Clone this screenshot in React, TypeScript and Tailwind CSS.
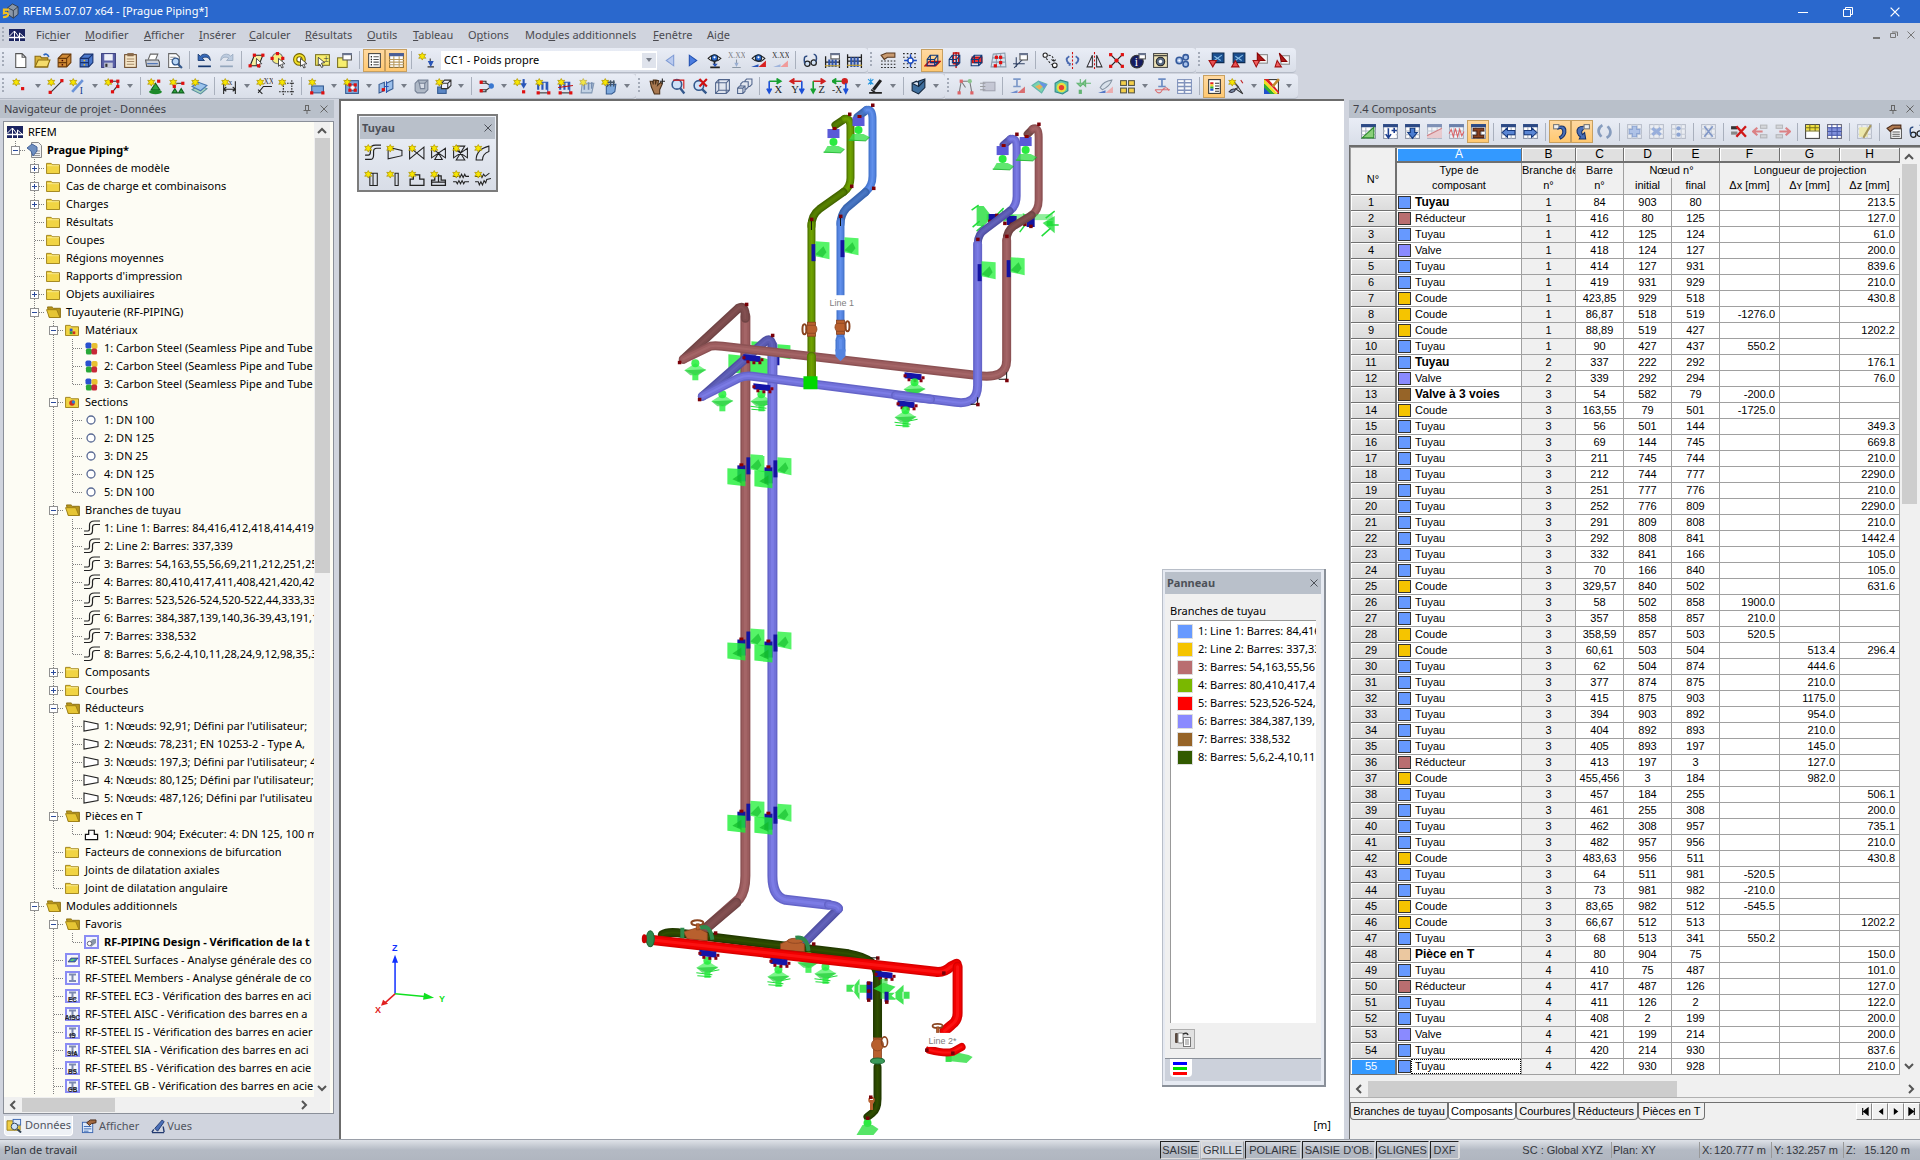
import React from "react";
import type { ReactNode } from "react";

const UI = "font-['Noto_Sans',sans-serif]";
const ARIAL = "font-['Liberation_Sans',Arial,sans-serif]";

/* ---------- drawing helpers (16 x 16 icons) ---------- */
const P = (d: string, stroke = "#222", fill = "none", w = 1) => (
  <path d={d} stroke={stroke} fill={fill} strokeWidth={w} />
);
const R = (x: number, y: number, w: number, h: number, fill = "none", stroke = "none") => (
  <rect x={x} y={y} width={w} height={h} fill={fill} stroke={stroke} />
);
const C = (x: number, y: number, r: number, fill = "none", stroke = "none", w = 1) => (
  <circle cx={x} cy={y} r={r} fill={fill} stroke={stroke} strokeWidth={w} />
);
const T = (x: number, y: number, s: string, size = 7, fill = "#333") => (
  <text x={x} y={y} fontSize={size} fill={fill} fontFamily="Liberation Serif, serif">{s}</text>
);
const Star = (
  <path d="M4 .5L5 2.400 7.300 2.200 6 4 7.300 5.900 5 5.700 4 7.600 3 5.700 .7 5.900 2 4 .7 2.200 3 2.400z" fill="#f7e600" stroke="#b09600" strokeWidth=".7" />
);
const Node = (x: number, y: number) => R(x - 1.5, y - 1.5, 3, 3, "#e01010");
const Grid = (
  <>
    {R(1.5, 1.5, 13, 13, "#fff", "#8a93a5")}
    {R(1, 1, 14, 3, "#2c4a86")}
    {P("M1 7.500h14M1 11h14M5.500 4v11M10.500 4v11", "#a9b1c0")}
  </>
);
const GrayGrid = (
  <>
    {R(1.5, 1.5, 13, 13, "#eef0f4", "#a6adba")}
    {P("M1 5.500h14M1 10.500h14M5.500 1v14M10.500 1v14", "#b9c0cc")}
  </>
);
const LoadTable = (
  <>
    {P("M2 4h10v9", "#2855b8")}
    {P("M3 4v7M7 4v7M11 4v7", "#2855b8", "none", 2)}
    {P("M2 14h12", "#333")}
    {Node(3, 14)}
    {Node(13, 14)}
  </>
);
const Axis = (a: string, b: string, l: string) => (
  <>
    {P("M3 3h10M10 .5L14 3l-4 2.500", a, a, 1.5)}
    {P("M3 3v10M.8 10L3 14l2.200-4", b, b, 1.5)}
    {T(8, 14, l, 10, "#222")}
  </>
);
const Persp = (fill: string, d: string) => (
  <>
    {P(d, "#c01010", fill, 1.3)}
    {P("M3 7h7v6H3zM6 3h7v7H6zM3 7l3-4M10 7l3-4M10 13l3-3", "#123a78")}
  </>
);
const Eye = (
  <>
    {P("M2 6q5-6 12 0q-6 6-12 0z", "#222", "#fff")}
    {C(8, 5.500, 3, "#2a66c8", "#123")}
    {C(8, 5, 1, "#fff")}
  </>
);
const Tri = (c1: string, c2: string) => (
  <>
    {P("M1 14h7V11.500z", "none", c1)}
    {P("M8 14h7V8z", "none", c2)}
  </>
);

const ICONS: Record<string, ReactNode> = {
  new: P("M3.500 1.500h6l3.500 3.500v9.500H3.500zM9.500 1.500V5H13", "#555", "#fff"),
  open: <>{P("M1 4h5l1 1.500h6V14H1z", "#8a6a10", "#d9b43a")}{P("M1 14l3-6.500h11L12.500 14z", "#8a6a10", "#f5dc6c")}{P("M9 3q3-2.500 5 1.500", "#2c66c0", "none", 1.5)}</>,
  archive: <>{P("M2 6l4-4h8v8l-4 4H2z", "#6b3a08", "#d08a35")}{P("M2 6h8v8M10 6l4-4M2 10h8", "#6b3a08")}{C(6, 8, .8, "#400")}{C(6, 12, .8, "#400")}</>,
  archiveBlue: <>{P("M2 6l4-4h8v8l-4 4H2z", "#16306e", "#4a78cc")}{P("M2 6h8v8M10 6l4-4M2 10h8", "#16306e")}{C(6, 8, .8, "#f4c020")}{C(6, 12, .8, "#f4c020")}</>,
  save: <>{R(1.5, 1.500, 13, 13, "#5b62a8", "#3c4080")}{R(4, 2, 8, 6, "#eceef8")}{R(4, 10, 8, 5, "#c5c8d8")}{R(5, 11, 2, 3, "#333")}</>,
  clipboard: <>{R(2.5, 2.500, 11, 12, "#f6e6c8", "#6c4b2c")}{R(5, 1, 6, 3, "#8a6a4a")}{P("M4.500 6.500h7M4.500 9h7M4.500 11.500h7", "#a58a68")}</>,
  print: <>{P("M4 7l2-5h7l-2 5", "#666", "#fff")}{P("M1.500 7.500h12l1 2v4h-12z", "#555", "#c9ced8")}{P("M3 11h10", "#3b66b0")}</>,
  preview: <>{P("M2.500 1.500h7l3 3v10h-10z", "#666", "#fff")}{P("M4 5h5M4 7h4", "#999")}{C(9, 9, 3.2, "#b9d6f6", "#34588c", 1.2)}{P("M11.500 11.500L15 15", "#34588c", "none", 2)}</>,
  undo: <>{P("M2 2v6h6L5.800 5.800Q11 3 13.500 8Q13 2 8 2Q5.500 2 4 4z", "#14366e", "#3568b8", .8)}{P("M2 13.500h12", "#14366e", "none", 1.6)}</>,
  redo: <g opacity=".55">{P("M14 2v6H8l2.200-2.200Q5 3 2.500 8Q3 2 8 2Q10.500 2 12 4z", "#5c7898", "#9fb6d2", .8)}{P("M2 13.500h12", "#5c7898", "none", 1.6)}</g>,
  selPara: <>{P("M2 13l4-10h8l-4 10z", "#222", "#f7f0a0")}{P("M8 6l5 5-2.500.3 1 2.700-1.300.4-1.100-2.600-1.300 1.200z", "#333", "#fff", .8)}{Node(2, 13)}{Node(6, 3)}{Node(14, 3)}{Node(10, 13)}</>,
  selLasso: <>{C(7, 6, 5, "#f7ef80", "#777")}{Node(2, 6)}{Node(7, 1.500)}{Node(12, 6)}{P("M8 6l6 5-3 .5 1.500 3-1.500.5-1.300-3-1.700 1.500z", "#333", "#fff", .8)}</>,
  selEllipse: <>{C(7, 7, 5.500, "#f4e22a", "#776600")}{C(7, 7, 2.500, "#fff", "#776600")}{P("M8 6l6 5-3 .5 1.500 3-1.500.5-1.300-3-1.700 1.500z", "#333", "#fff", .8)}</>,
  selPlus: <>{R(1.5, 2.500, 13, 10, "#f7ee6e", "#7a7020")}{T(9, 9, "±", 9)}{P("M4 5l6 5-3 .5 1.500 3.500-1.500.5-1.500-3L4 12.500z", "#333", "#fff", .8)}</>,
  noteCard: <>{R(1.5, 5.500, 9, 9, "#f7ee6e", "#7a7020")}{R(6.500, 1.500, 8, 6, "#fff", "#555")}{R(6, 1, 9, 2, "#6a7590")}</>,
  list: <>{R(2.500, 1.500, 11, 13, "#fff", "#444")}{P("M4.500 4.500h1M4.500 7h1M4.500 9.500h1M4.500 12h1", "#000", "none", 1.4)}{P("M7 4.500h5M7 7h5M7 9.500h5M7 12h5", "#555")}</>,
  table: <>{R(1.5, 1.500, 13, 13, "#fff", "#8c6c30")}{R(1, 1, 14, 3, "#4b5f98")}{P("M1 7h14M1 9.500h14M1 12h14M5.500 4v11M10.500 4v11", "#b99a60")}</>,
  starLoad: <>{Star}{P("M9 14h6M11.500 6v5", "#333")}{P("M10 9h4l-2 4z", "#2855b8", "#2855b8")}</>,
  left: P("M11 3v10L4 8z", "#7f9bd4", "#b9caef"),
  right: P("M5 3v10l7-5z", "#2150b0", "#4a7ce0"),
  eyeDown: <>{Eye}{P("M8 9v3M4 14.500h9", "#222", "none", 1.6)}{P("M6 11h5l-2.500 3z", "none", "#2855b8")}</>,
  xxxDown: <g opacity=".6">{T(0, 6, "X.XX", 7)}{P("M8 7v4M4 14.500h8", "#567")}{P("M6 10h4l-2 4z", "none", "#6a8ac0")}</g>,
  eyeTri: <>{Eye}{Tri("#2855b8", "#d82020")}</>,
  xxxTri: <>{T(0, 6, "X.XX", 7)}{Tri("#9fb4dc", "#f09a9a")}</>,
  glasses: <>{C(5, 11, 2.500, "#cfe0f4", "#222", 1.2)}{C(11, 10, 2.500, "#cfe0f4", "#222", 1.2)}{P("M2.500 11Q1 3 5 4M13 9Q15 3 11 2", "#2b4a80", "none", 1.4)}</>,
  ruler1: <>{P("M1.500 4v11M14.500 7v8M1 9.500h14", "#222", "none", 1.2)}{P("M5 7v7M8 7v7M11 7v7", "#2d52a8", "none", 2)}{P("M1 13h14", "#c8a020")}{R(6.500, 1.500, 8, 5, "#fff", "#555")}{R(6, 1, 9, 2, "#6a7590")}</>,
  ruler2: <>{P("M1.500 2v13M14.500 2v13M1 8.500h14M1 5h14", "#222", "none", 1.2)}{P("M5 5v9M8 5v9M11 5v9", "#2d52a8", "none", 2)}{P("M1 12.500h14", "#c8a020")}</>,
  handGrid: <>{P("M1 3l5-2h8v4H7L4 7z", "#5a3a20", "#c89a70")}<g strokeDasharray="1.500 1.500">{P("M1 8.500h14M1 11.500h14M1 14.500h14", "#222")}</g></>,
  gridCross: <><g strokeDasharray="1.500 2">{P("M1 1.500h14M1 5h14M1 11h14M1 14.500h14", "#222")}</g>{C(8, 8, 2.500, "#fff", "#1b4ac0", 1.300)}{P("M8 2v4M8 10v4M2 8h4M10 8h4", "#1b4ac0", "none", 1.300)}</>,
  planeXY: Persp("#f6a6a6", "M1 13l4-4h10l-4 4z"),
  planeXZ: Persp("none", "M7 1h5v10H7zM9.500 0v15"),
  planeYZ: Persp("#f03030", "M4 5h9v5H4z"),
  gridRed: <>{P("M3 2l11-1 1 13H1z", "#8a9aaa", "#d8e4f0")}{P("M2 5.500h12M2 9.500h12M6 2v12M10 2v12", "#8a9aaa")}{Node(6, 5)}{Node(10, 5)}{Node(10, 10)}{Node(5, 13)}</>,
  axes: <>{P("M4 14V5M1 11h11M2 15l8-8", "#346")}{R(7.500, 1.500, 7, 6, "#fff", "#555")}{R(7, 1, 8, 2, "#6a7590")}</>,
  move: <>{C(3, 3, 2, "#fff", "#222")}{C(12, 12.500, 2.200, "#fff", "#222")}<g strokeDasharray="2 1.500">{P("M6 3q5 0 5 6M9 7l2 2 2-2M4 6l5 6", "#222")}</g></>,
  rotate: <>{P("M5 4Q0 7 5 11M11 4q5 3 0 7M3 10l2.500 1L5 13", "#4a6ab0", "none", 1.800)}<g strokeDasharray="2 1.500">{P("M8 0v16", "#d01010")}</g></>,
  mirror: <>{P("M6 3v11H1zM10 3v11h5z", "#333", "#eef")}<g strokeDasharray="2 1.500">{P("M8 0v16", "#d01010")}</g></>,
  crossx: <>{P("M2 2l12 12M14 2L2 14", "#222", "none", 1.200)}{Node(2.500, 2.500)}{Node(13.500, 2.500)}{Node(2.500, 13.500)}{Node(13.500, 13.500)}{C(8, 8, 2, "#e01010")}</>,
  info: <>{C(6.500, 9, 6, "#151c60", "#333")}{T(4.500, 13, "i", 11, "#fff")}{R(8.500, 1.500, 6, 5, "#fff", "#555")}{R(8, 1, 7, 2, "#6a7590")}</>,
  docGear: <>{R(1.500, 1.500, 13, 13, "#ede3b8", "#444")}{C(8, 9, 4, "#5a6a80", "#222")}{C(8, 9, 1.600, "#fff")}{P("M2 3.500h12", "#222")}</>,
  gears: <>{C(5, 8, 3, "#a9c2ea", "#345a9c", 1.500)}{C(11, 5, 2.500, "#a9c2ea", "#345a9c", 1.500)}{C(11, 11.500, 2.500, "#a9c2ea", "#345a9c", 1.500)}{C(5, 8, 1, "#fff")}</>,
  book1: <>{P("M4 1h11v9H4z", "#0c2a50", "#1a4f90")}{P("M6 8l7-5M6 4l6 4", "#8ac0e8")}{P("M1 8h7l-3.500 6z", "#a01010", "#e85050")}</>,
  book2: <>{P("M3 1h11v9H3z", "#0c2a50", "#1a4f90")}{P("M5 8l7-5M5 4l6 4", "#8ac0e8")}{P("M5 8l3.500 6h-7z", "#a01010", "#e85050")}</>,
  red1: <>{R(6.500, 2.500, 8, 8, "#f4f4f4", "#888")}{P("M5 1l7 7H8l-3 1z", "#800", "#b01818")}{P("M1 8h6l-3 6z", "#a01010", "#f06060")}</>,
  red2: <>{R(6.500, 3.500, 8, 8, "#f4f4f4", "#888")}{P("M5 1l7 8H7z", "#800", "#b01818")}{P("M3 8l4 6H1z", "#a01010", "#f06060")}</>,

  nodeStar: <>{Star}{Node(10, 10)}</>,
  lineStar: <>{P("M3 14L14 3", "#333")}{Star}{Node(3, 13.500)}{Node(14, 2.500)}</>,
  lineI: <>{P("M3 13L13 2", "#6a93d8", "none", 2.500)}{Star}{T(10, 15, "I", 9, "#123a90")}</>,
  polyStar: <>{P("M6 3h7v4l-5 6", "#333")}{Star}{Node(7, 3)}{Node(13, 3)}{Node(13, 8)}{Node(8, 13)}</>,
  support: <>{P("M8 5l4 6H4z", "#116020", "#2fa83c")}<ellipse cx="8" cy="13" rx="6" ry="2.200" fill="#1d8a2a" />{Star}{Node(11, 3)}</>,
  support2: <>{P("M4 5h10", "#333")}{P("M3 14l2.500-4L8 14zM9 14l2.500-4L14 14z", "#116020", "#2fa83c")}{Star}{Node(13, 5)}{Node(5, 8)}</>,
  surfStar: <>{P("M1 11l6-4 8 3-6 5z", "#5a90a0", "#a8d6c0")}{P("M1 8l6-4 8 3-6 5z", "#4a78b0", "#9cc4ec")}{Star}</>,
  dim: <>{P("M2.500 3v12M13.500 3v12M2 10.500h12M5 8.500l-2.500 2L5 12.500M11 8.500l2.500 2-2.500 2", "#222")}{Star}{T(7, 7, "x", 7)}</>,
  dimxx: <>{P("M2 14L7 8h8M2 11l4 4", "#222")}{Star}{T(7, 6, "XX", 7)}</>,
  frame: <><g strokeDasharray="1.500 1">{P("M5 2v14M13 2v14M1 5h14M1 13h14", "#222")}</g>{Star}</>,
  surf: <>{R(3.500, 7.500, 11, 6.500, "#7ea9dc", "#345a90")}{Star}{Node(3.500, 14)}{Node(14, 14)}</>,
  opening: <>{R(2.500, 2.500, 12, 12, "#7ea9dc", "#345a90")}{R(6.500, 6.500, 5, 5, "#fff", "#345a90")}{Star}{Node(6.500, 6.500)}{Node(11.500, 6.500)}{Node(6.500, 11.500)}{Node(11.500, 11.500)}</>,
  solidPlane: <>{P("M1 6l5-2v8l-5 2zM8 5l6-3v8l-6 3z", "#345a90", "#9cc0ec")}{P("M6 8h4M8 3v11", "#2855b8")}{Node(5, 11)}</>,
  solid: <>{P("M2 5l3-3h9v9l-3 3H4l-2-2z", "#778296", "#aeb8c6")}{P("M6 5h5v5H7z", "#778296", "#d6dce6")}{P("M11 5l3-3M6 5L5 2", "#778296")}</>,
  solid2: <>{R(2.500, 8.500, 8, 6, "#5a86c4", "#345a90")}{P("M6 5l3-3h6v5l-3 3H6zM6 5h6v5M12 5l3-3", "#333", "#eef")}{Star}</>,
  conn: <>{P("M2.500 3h5v2h-5zM2.500 11h5v2h-5zM7 4.500l4 2M7 12l4-3", "#333")}{Node(3, 4)}{Node(3, 12)}{C(12.500, 7.500, 2.500, "#3a78d0")}</>,
  loadn: <>{P("M10 1v5", "#2855b8", "none", 2)}{P("M7 5h6l-3 5z", "none", "#2855b8")}{Star}{Node(10, 13)}</>,
  loadm: <>{LoadTable}{Star}</>,
  loadm2: <>{LoadTable}{Star}{P("M1 9l14-2", "#c01010")}</>,
  surfLoad: <g opacity=".7">{P("M3 5h11l-2 9H2z", "#5a789c", "#b8cce2")}{P("M5 4v7M9 4v7M12 4v6", "#4a6a9c", "none", 1.500)}{Star}</g>,
  solidLoad: <>{P("M5 8l3-2h6l-1 7-3 2H5z", "#345a90", "#7ea9dc")}{P("M4 4h9M6 2v6M9 2v6M12 2v6", "#456", "none", 1.300)}{Star}</>,
  hand: <>{P("M3 8L2 3l2 0 1 3V2h2v4l1-4 2 .5L9 7l3-3 1.500 1.500L11 11v4H6z", "#4a3018", "#a87850")}{P("M11 3h5M13.500.5v5", "#222")}</>,
  zoom: <>{C(6.500, 6, 4.500, "#cfe2f8", "#34588c", 1.500)}{P("M9.500 9.500l4 5", "#34588c", "none", 2.200)}{P("M3 2h10v8", "#d01010")}</>,
  zoomX: <>{C(6.500, 7, 4.500, "#cfe2f8", "#34588c", 1.500)}{P("M9.500 10.500l4 4", "#34588c", "none", 2.200)}{P("M7 1l7 7M14 1L7 8", "#d01010", "none", 2)}</>,
  cube: <>{P("M1.500 4.500l3-3h10v10l-3 3h-10zM1.500 4.500h10v10M11.500 4.500l3-3M4.500 1.500v10h10M4.500 11.500l-3 3", "#51658c")}</>,
  cubes: <>{P("M1.500 9.500l2-2h5v5l-2 2h-5zM1.500 9.500h5v5M6.500 9.500l2-2M4.500 7V5.500l2-2h5v5l-2 2h-1M8.500 4V2.500l1.500-1.500h5v5L13 8h-1.500", "#51658c")}</>,
  axX: Axis("#18a030", "#1c50d8", "X"),
  axY: <>{P("M13 3H3M6 .5L2 3l4 2.500", "#d02020", "#d02020", 1.500)}{P("M13 3v10M10.800 10l2.200 4 2.200-4", "#1c50d8", "#1c50d8", 1.500)}{T(3, 14, "Y", 10, "#222")}</>,
  axZ: Axis("#d02020", "#18a030", "Z"),
  axmX: <>{P("M1 3h10M4 .5L0 3l4 2.500", "#18a030", "#18a030", 1.500)}{C(12, 3, 3, "#d02020")}{P("M13 5v8M11 10l2 4 2-4", "#1c50d8", "#1c50d8", 1.500)}{T(0, 14, "-X", 9, "#222")}</>,
  scope: <>{P("M13 2L6 11", "#222", "none", 3)}{P("M2 14h12M4 11l4 3", "#222", "none", 1.600)}{P("M1 1l5 5M6 1L1 6M3.500.5v6", "#2898e0")}</>,
  shape: <>{P("M2 5l6 3v-5l6-2v8l-6 6-6-3z", "#14263c", "#3f6f9e")}{P("M8 8l6-6M2 5l4-2 2 1", "#14263c", "#8ab0d4")}</>,
  frameN: <g opacity=".6">{P("M2 14L4 3h8l2 11M4 3l4 6", "#333")}{Node(4, 3)}{C(12, 3, 2, "#50b050")}{Node(2, 14)}{Node(14, 14)}</g>,
  block: <g opacity=".5">{R(4, 4, 11, 8, "#aab", "#667")}{P("M1 5h5M1 8h5M1 11h5", "#555")}</g>,
  iBeam: <g opacity=".6">{P("M4 1h7M7.500 1v7M4 8h7", "#3a66b0", "none", 1.600)}{Tri("#2855b8", "#d82020")}</g>,
  rainbow: <g opacity=".8">{P("M1 7l6-4 8 3-5 8z", "#4a9", "#60d0a0")}{P("M7 3l8 3-3 4z", "none", "#4a80e0")}{P("M4 8l4-2 3 2-3 3z", "none", "#f0a030")}</g>,
  rainbowCube: <>{P("M2 5l5-3 7 2v8l-5 3-7-2z", "#388", "#60c8a8")}{C(8, 9, 4.500, "#e8e040")}{C(8, 9, 2.500, "#e84030")}</>,
  greenArr: <g opacity=".7">{P("M5 1v4M2 5h6L5 8zM15 5h-5M10 2v6L7 5z", "#2fa040", "#5cc46a")}{P("M5 15v-4", "#2fa040", "none", 3)}</g>,
  knife: <g opacity=".75">{P("M3 9q3-6 11-7q-2 6-9 9z", "#678", "#d6e0ea")}{Tri("#2855b8", "#f09a9a")}</g>,
  squares: <>{R(1.500, 2.500, 5.500, 4.500, "#f4cf4a", "#554")}{R(9, 2.500, 5.500, 4.500, "#f4cf4a", "#554")}{R(1.500, 9.500, 5.500, 4.500, "#f4cf4a", "#554")}{R(9, 9.500, 5.500, 4.500, "#f4cf4a", "#554")}</>,
  iCurve: <g opacity=".7">{P("M4 1h7M7.500 1v7M4 8h7", "#3a66b0", "none", 1.600)}{P("M1 11h14M1 11q4 6 7 0q4-4 6 1", "#d84040")}</g>,
  grid4: <g opacity=".8">{R(1.500, 1.500, 13, 13, "#fff", "#6a7fb0")}{P("M1 4.500h14M1 8h14M1 11.500h14M8 1v14", "#6a7fb0", "none", 1.400)}</g>,
  colorDoc: <>{R(2.500, 1.500, 11, 13, "#fff", "#333")}{R(4, 4, 3, 2, "#e02020")}{R(4, 6, 3, 2, "#f0d020")}{R(4, 8, 3, 2, "#30b030")}{R(4, 10, 3, 2, "#2050d0")}{P("M8.500 5h4M8.500 7.500h4M8.500 10h4M8.500 12.500h4", "#333")}</>,
  brush: <>{P("M14 15l-4-6-3 1z", "#333", "#cfd8e4")}{P("M10 9L5 3", "#444", "none", 1.500)}{Star}{P("M1 13q3-4 6-2-2 4-6 2z", "#334", "#7a8aa4")}{P("M12 2l2 3", "#c02020")}</>,
  colorBrush: <>{R(1.500, 1.500, 13, 13, "#fff", "#333")}{P("M1 8l7 7H1z", "none", "#2050d0")}{P("M1 4v5l6 6h4z", "none", "#30b030")}{P("M1 1v4l10 10h3z", "none", "#f0e020")}{P("M1 1h4l10 12v2z", "none", "#e02020")}{P("M15 1L9 8", "#c08a30", "none", 2.500)}</>,

  gEdit: <>{Grid}{P("M2 14L13 4v10z", "#2a8a2a", "#8ad07a")}</>,
  gAdd: <>{Grid}{R(3, 5, 10, 9, "#fff")}{P("M6 5v8M3.500 10.500L6 14l2.500-3.500M9 7h5M11.500 4.500v5", "#1c3f90", "none", 1.500)}</>,
  gDown: <>{Grid}{P("M6 5h4v4h2.500L8 14.500 3.500 9H6z", "#123a80", "#4a7cd0")}</>,
  gTri: <g opacity=".55">{Grid}{P("M1 14V11l14-6v9z", "none", "#f3b6b6")}{P("M1 12L15 5", "#c03030")}</g>,
  gWave: <g opacity=".65">{Grid}{P("M1 10l2-4 2 7 2-8 2 8 2-7 2 6 2-4", "#d82020")}</g>,
  gBeam: <>{Grid}{P("M3 5h10v2.500H9.500v4H13V14H3v-2.500h3.500v-4H3z", "#4a2010", "#8a4020")}</>,
  gLeft: <>{Grid}{P("M2 9l5-4.500V7h7v4H7v2.500z", "#16387c", "#5a86d4")}</>,
  gRight: <>{Grid}{P("M14 9L9 4.500V7H2v4h7v2.500z", "#16387c", "#5a86d4")}</>,
  jumpL: <>{R(1.500, 1.500, 5, 4, "#eee", "#777")}{P("M7 3q7-1 6 6-1 4-5 6l-1-2q4-2 3-6-1-3-5-1", "#14306c", "#4a70b8")}</>,
  jumpR: <>{R(9.500, 1.500, 5, 4, "#eee", "#777")}{P("M9 3Q2 3 3 9q1 3 3 4l-1 2h6l-1-6-2 2Q6 8 9 6", "#14306c", "#4a70b8")}</>,
  cycle: <g opacity=".6">{P("M6 2Q1 5 3 10l2 3M10 14q5-3 3-8l-2-3", "#4a6a9c", "none", 2.500)}</g>,
  plus: <g opacity=".7">{GrayGrid}{P("M6 3h4v3h3v4h-3v3H6v-3H3V6h3z", "#6a8ac8", "#9ab4e4")}</g>,
  times: <g opacity=".7">{GrayGrid}{P("M4 5l8 6M12 5l-8 6", "#7a98d4", "none", 3)}</g>,
  colon: <g opacity=".7">{GrayGrid}{C(8, 5, 2, "#6a8ac8")}{C(8, 11, 2, "#6a8ac8")}</g>,
  gX: <g opacity=".7">{GrayGrid}{P("M4 3l8 10M12 3L4 13", "#5a78b8", "none", 1.600)}</g>,
  delX: <>{R(1, 3, 6, 3, "#333")}{R(1, 8, 6, 3, "#888")}{P("M6 3l9 10M15 3L6 13", "#d01818", "none", 2.200)}</>,
  delL: <g opacity=".6">{R(8, 2, 6, 3, "#ccc", "#999")}{R(8, 11, 6, 3, "#ccc", "#999")}{P("M1 8h9M5 4.500L1 8l4 3.500", "#d84040", "none", 2)}</g>,
  delR: <g opacity=".6">{R(2, 2, 6, 3, "#ccc", "#999")}{R(2, 11, 6, 3, "#ccc", "#999")}{P("M5 8h9M11 4.500L15 8l-4 3.500", "#d84040", "none", 2)}</g>,
  gYellow: <>{R(1.500, 1.500, 13, 13, "#fff", "#444")}{R(2, 2, 12, 5, "#f0e03a")}{P("M1 4.500h14M1 7.500h14M5.500 1v7M10.500 1v7", "#77701a")}</>,
  gBlue: <>{R(1.500, 1.500, 13, 13, "#fff", "#667")}{R(2, 4, 12, 8, "#8090dc")}{P("M1 4.500h14M1 8h14M1 11.500h14M5.500 1v14M10.500 1v14", "#4a5aa8")}</>,
  gPen: <g opacity=".7">{GrayGrid}{R(3, 4, 8, 9, "#f2ea90")}{P("M14 2L8 12l-1 2", "#907820", "none", 2)}</g>,
  handDoc: <>{R(4.500, 5.500, 10, 9, "#fff", "#555")}{P("M6 8.500h7M6 10.500h7M6 12.500h7", "#555")}{P("M1 5l5-3h8v3H8L4 8z", "#4a2a18", "#b07a50")}</>,

  pBranch: <>{P("M1 14.500h5q3 0 3-4V7q0-3 3-3h4M1 10.500h3q2 0 2-3V5q0-4 5-4h5", "#222", "none", 1.100)}{Star}</>,
  pRed: <>{P("M2 3l13 3v5L2 14z", "#222")}{Star}</>,
  pValve: <>{P("M1.500 3v11L15 3v11z", "#222")}{Star}</>,
  p3: <>{P("M1.500 4v9L14.500 4v9zM8 8.500L4.500 14.500h7z", "#222")}{Star}</>,
  p4: <>{P("M1.500 4v9L14.500 4v9zM4 2h8L4 15h8z", "#222")}{Star}</>,
  pElbow: <>{P("M2 15q0-10 12-13v5q-6 2-6 8z", "#222")}{Star}</>,
  pFl: <>{P("M5.500 3h3v11.500h-3zM8.500 3h4v11.500h-4z", "#222")}{Star}</>,
  pFl2: <>{P("M8.500 3h3v11.500h-3z", "#222")}{Star}</>,
  pT: <>{P("M2 14.500v-6h3v-4h6v4h4v6z", "#222", "none", 1.200)}{Star}</>,
  pT2: <>{P("M1.500 14.500v-5h3v-4h6v4h4v5zM8 4v8M1 11.500h14", "#222", "none", 1.200)}{Star}</>,
  pBel: <>{P("M1 6h4l1-2 1.500 3L9 4l1.500 3L12 4l1 2h3M1 11h3l1 2 1.500-3L8 13l1.500-3 1.500 3 1-2h4", "#222")}{Star}</>,
  pBel2: <>{P("M1 6h4l1-2 1.500 3L9 4l1.500 2 4-3M1 11h3l1 3 1.500-3L8 14l1.500-4 1.500 2 1-3 4-1", "#222")}{Star}</>,
};

const Icon = ({ n, size = 17 }: { n: string; size?: number }) => (
  <svg viewBox="0 0 16 16" width={size} height={size} aria-hidden="true" className="shrink-0">{ICONS[n]}</svg>
);

/* toolbar tokens: "|" separator, "v" drop arrow, "!name" pressed button */
const Bar = ({ items }: { items: string }) => (
  <>
    {items.split(" ").map((t, i) => {
      if (t === "|") return <span key={i} className="mr-[3px] ml-1 h-[18px] w-px shrink-0 bg-[#a9b0bd]" />;
      if (t === "v")
        return (
          <button key={i} type="button" aria-label="Plus d'options" className="flex h-6 w-[13px] shrink-0 items-center justify-center">
            <svg viewBox="0 0 6 4" width="6" height="4" aria-hidden="true"><path d="M0 0h6L3 4z" fill="#777d88" /></svg>
          </button>
        );
      const on = t[0] === "!";
      const n = on ? t.slice(1) : t;
      return (
        <button
          key={i}
          type="button"
          aria-label={n}
          aria-pressed={on}
          className={"flex h-[23px] w-[22px] shrink-0 items-center justify-center " + (on ? "border border-[#c8a060] bg-gradient-to-b from-[#ffd9a0] to-[#ffc870]" : "")}
        >
          <Icon n={n} />
        </button>
      );
    })}
  </>
);

const Grip = () => (
  <span className="mr-[5px] ml-[2px] h-4 w-[2px] shrink-0 bg-[repeating-linear-gradient(to_bottom,#a4abb8_0_2px,transparent_2px_4px)]" />
);

const Group = ({ items, children }: { items: string; children?: ReactNode }) => (
  <div className="flex h-[25px] shrink-0 items-center rounded-r border-b border-[#b4bac6] bg-gradient-to-b from-[#e9edf6] to-[#d9dee8] pr-[3px]">
    <Grip />
    <Bar items={items} />
    {children}
  </div>
);

const Close = ({ size = 8 }: { size?: number }) => (
  <svg viewBox="0 0 8 8" width={size} height={size} aria-hidden="true"><path d="M.5.5l7 7M7.500.5l-7 7" stroke="currentColor" fill="none" /></svg>
);
const Pin = () => (
  <svg viewBox="0 0 8 9" width="8" height="9" aria-hidden="true"><path d="M2 .5h4M2.500.5v5M5.500.5v5M.5 5.500h7M4 6v3" stroke="currentColor" fill="none" /></svg>
);
const Chev = ({ d }: { d: "u" | "d" | "l" | "r" }) => {
  const p = { u: "M1 7l4-4 4 4", d: "M1 3l4 4 4-4", l: "M7 1L3 5l4 4", r: "M3 1l4 4-4 4" }[d];
  return <svg viewBox="0 0 10 10" width="10" height="10" aria-hidden="true"><path d={p} stroke="#555" strokeWidth="2" fill="none" /></svg>;
};

/* ---------- top of the window ---------- */
const Logo = () => (
  <svg viewBox="0 0 16 12" width="16" height="12" aria-hidden="true">
    <rect width="16" height="12" fill="#1b2460" />
    <path d="M0 8.500h16" stroke="#fff" strokeWidth="1.500" />
    <path d="M5.500 12V2M5.500 2L0 7.500M5.500 2l4.500 6M10.500 12V4l5 4.500" stroke="#fff" fill="none" />
  </svg>
);

const TitleBar = () => (
  <header className="flex h-[23px] shrink-0 items-center bg-[#2a68cd] pl-[2px] text-[11px] text-white">
    <svg viewBox="0 0 18 18" width="17" height="17" aria-hidden="true">
      <path d="M6 5l5-4 6 3v8l-5 4-6-4z" fill="#8a97a8" stroke="#333f50" />
      <path d="M6 5l6 3v8M12 8l5-4" stroke="#333f50" fill="none" />
      <path d="M7.500 7H2v4q4-1.500 4.500 1T1 15" stroke="#f2c020" strokeWidth="2.200" fill="none" />
    </svg>
    <h1 className="ml-1">RFEM 5.07.07 x64 - [Prague Piping*]</h1>
    <div className="ml-auto flex h-full">
      <button type="button" aria-label="Réduire" className="flex w-[45px] items-center justify-center">
        <svg viewBox="0 0 10 10" width="10" height="10"><path d="M0 5.500h10" stroke="#fff" /></svg>
      </button>
      <button type="button" aria-label="Restaurer" className="flex w-[45px] items-center justify-center">
        <svg viewBox="0 0 10 10" width="10" height="10"><path d="M.5 2.500h7v7h-7zM2.500 2V.5h7v7H8" stroke="#fff" fill="none" /></svg>
      </button>
      <button type="button" aria-label="Fermer" className="flex w-[50px] items-center justify-center">
        <Close size={10} />
      </button>
    </div>
  </header>
);

const MENUS: [string, string][] = [
  ["Fic_hier", "w-[49px]"], ["_Modifier", "w-[59px]"], ["_Afficher", "w-[55px]"], ["_Insérer", "w-[50px]"],
  ["_Calculer", "w-[56px]"], ["_Résultats", "w-[62px]"], ["_Outils", "w-[46px]"], ["_Tableau", "w-[55px]"],
  ["O_ptions", "w-[57px]"], ["Mod_ules additionnels", "w-[128px]"], ["_Fenêtre", "w-[54px]"], ["Ai_de", "w-[40px]"],
];

const MenuBar = () => (
  <nav className="flex h-6 shrink-0 items-center text-[11px] text-[#4a4a50]" aria-label="Menu principal">
    <Grip />
    <Logo />
    <span className="w-[11px]" />
    {MENUS.map(([m, w]) => {
      const [a, b] = m.split("_");
      return (
        <button key={m} type="button" className={"shrink-0 text-left whitespace-nowrap " + w}>
          {a}<u>{b[0]}</u>{b.slice(1)}
        </button>
      );
    })}
    <div className="ml-auto flex items-center gap-[9px] pr-[5px] text-[#777]">
      <button type="button" aria-label="Réduire le document"><svg viewBox="0 0 8 8" width="8" height="8"><path d="M0 7h7" stroke="currentColor" strokeWidth="2" /></svg></button>
      <button type="button" aria-label="Restaurer le document"><svg viewBox="0 0 8 8" width="8" height="8"><path d="M.5 2.500h5v4h-5zM2 1h5.500v4" stroke="currentColor" fill="none" /></svg></button>
      <button type="button" aria-label="Fermer le document"><Close /></button>
    </div>
  </nav>
);

const Toolbars = () => (
  <div className="shrink-0 pt-px">
    <div className="mb-px flex">
      <Group items="new open archive archiveBlue save clipboard print preview | undo redo | selPara selLasso selEllipse selPlus noteCard | !list !table | starLoad">
        <div className="relative ml-1 flex h-[19px] w-[216px] items-center bg-white">
          <select aria-label="Cas de charge" className="h-full w-full appearance-none bg-transparent pl-[3px] text-[11px] text-black">
            <option>CC1 - Poids propre</option>
          </select>
          <span className="pointer-events-none absolute top-[2px] right-px flex h-[15px] w-[14px] items-center justify-center bg-[#dfe3ec]">
            <svg viewBox="0 0 6 4" width="6" height="4" aria-hidden="true"><path d="M0 0h6L3 4z" fill="#777d88" /></svg>
          </span>
        </div>
        <span className="w-[2px]" />
        <Bar items="left right eyeDown xxxDown eyeTri xxxTri | glasses ruler1 ruler2" />
      </Group>
      <Group items="handGrid gridCross !planeXY planeXZ planeYZ gridRed axes | move rotate mirror crossx info docGear gears" />
      <Group items="book1 book2 red1 red2" />
    </div>
    <div className="flex">
      <Group items="nodeStar v lineStar lineI v polyStar v | support support2 surfStar | dim v dimxx frame | surf v opening v solidPlane v solid solid2 v | conn v loadn loadm loadm2 surfLoad solidLoad v" />
      <Group items="hand zoom zoomX cube cubes | axX axY axZ axmX v scope v | shape v" />
      <Group items="frameN block | iBeam rainbow rainbowCube greenArr knife squares v iCurve grid4 | !colorDoc brush v colorBrush v" />
    </div>
  </div>
);

/* ---------- project navigator ---------- */
const TICONS: Record<string, ReactNode> = {
  logo: <Logo />,
  doc: <svg viewBox="0 0 16 16" width="16" height="16"><path d="M5.500.5h7l3 3v12h-10z" fill="#f2f2f2" stroke="#888" /><path d="M8 9h6M8 11.500h6M8 13.500h6" stroke="#999" /><path d="M1 6l5-4 5 3v4l-4 5-2-5z" fill="#6f8fc0" stroke="#44639a" /></svg>,
  f: <svg viewBox="0 0 16 13" width="15" height="12"><path d="M.5 1.500h5l1.500 1.500h7.500v9.500H.5z" fill="#f1d443" stroke="#9c7f16" /><path d="M1 4h13" stroke="#f9ea90" /></svg>,
  o: <svg viewBox="0 0 16 13" width="15" height="12"><path d="M1.500 1h5L8 2.500h7.500v10h-12z" fill="#b8961c" stroke="#8a6e10" /><path d="M.5 4h11l3.500 8.500H3.500z" fill="#e6c534" stroke="#9c7f16" /></svg>,
  fm: <svg viewBox="0 0 16 13" width="15" height="12"><path d="M.5 1.500h5l1.500 1.500h7.500v9.500H.5z" fill="#f1d443" stroke="#9c7f16" /><path d="M5 5h3v3H5z" fill="#2a50d0" /><path d="M8 8h3v3H8z" fill="#d03020" /><path d="M5 8h3v3H5z" fill="#30a030" /></svg>,
  fs: <svg viewBox="0 0 16 13" width="15" height="12"><path d="M.5 1.500h5l1.500 1.500h7.500v9.500H.5z" fill="#f1d443" stroke="#9c7f16" /><circle cx="7.500" cy="7.500" r="3" fill="#d03020" /><circle cx="9" cy="6.500" r="1.800" fill="#2a80d0" /></svg>,
  mat: <svg viewBox="0 0 14 14" width="13" height="13"><rect x=".5" y=".5" width="6.500" height="6.500" rx="2" fill="#2a50d0" /><rect x="7" y="1" width="6.500" height="6.500" rx="2" fill="#e8c030" /><rect x="1" y="7" width="6.500" height="6.500" rx="2" fill="#28a838" /><rect x="7" y="7" width="6" height="6.500" rx="2" fill="#c82838" /></svg>,
  sec: <svg viewBox="0 0 14 14" width="14" height="14"><circle cx="7" cy="7" r="4" fill="#fff" stroke="#5a6a94" strokeWidth="1.300" /></svg>,
  br: <svg viewBox="0 0 17 16" width="17" height="16"><path d="M1 14.500h5q3.500 0 3.500-4V7q0-2.500 3-2.500H17M1 11h4q1.500 0 1.500-2V5q0-4 5-4H17" stroke="#222" strokeWidth="1.200" fill="none" /></svg>,
  red: <svg viewBox="0 0 16 12" width="16" height="12"><path d="M1 1l14 3v4.500L1 11z" stroke="#222" strokeWidth="1.100" fill="#fff" /></svg>,
  te: <svg viewBox="0 0 16 14" width="15" height="14"><path d="M1.500 13V7.500H5V3h6v4.500h3.500V13z" stroke="#111" strokeWidth="1.300" fill="#fff" /></svg>,
};
const modIcon = (label: string) => {
  const beam = label !== "pipe" && label !== "surf";
  return (
    <svg viewBox="0 0 15 14" width="15" height="14">
      <rect x="1" y="1" width="13" height="12" fill="#f4f6fc" stroke="#8a8cf4" strokeWidth="2" />
      {label === "pipe" && <><path d="M4 8l5-4h3v4l-5 4z" fill="#8a98a8" /><circle cx="5.500" cy="8.500" r="2.200" fill="#fff" stroke="#667" /></>}
      {label === "surf" && <><path d="M3 9l3-4h7l-3 4z" fill="#3a78d0" stroke="#333" strokeWidth=".6" /><path d="M5 8l2-2h3L8 8z" fill="#60d060" /></>}
      {beam && <path d="M4 3.500h7M7.500 3v7M4 10h7" stroke="#7d8ab0" strokeWidth="2" />}
      {beam && label.length > 1 && (
        <text x="7.500" y="13" fontSize="6.500" textAnchor="middle" fontFamily="Liberation Sans" fill="#222" fontWeight="bold">{label}</text>
      )}
    </svg>
  );
};

const TREE_SRC = `0||logo|RFEM
1|-|doc|*Prague Piping*
2|+|f|Données de modèle
2|+|f|Cas de charge et combinaisons
2|+|f|Charges
2||f|Résultats
2||f|Coupes
2||f|Régions moyennes
2||f|Rapports d'impression
2|+|f|Objets auxiliaires
2|-|o|Tuyauterie (RF-PIPING)
3|-|fm|Matériaux
4||mat|1: Carbon Steel (Seamless Pipe and Tube
4||mat|2: Carbon Steel (Seamless Pipe and Tube
4||mat|3: Carbon Steel (Seamless Pipe and Tube
3|-|fs|Sections
4||sec|1: DN 100
4||sec|2: DN 125
4||sec|3: DN 25
4||sec|4: DN 125
4||sec|5: DN 100
3|-|o|Branches de tuyau
4||br|1: Line 1: Barres: 84,416,412,418,414,419,4
4||br|2: Line 2: Barres: 337,339
4||br|3: Barres: 54,163,55,56,69,211,212,251,252
4||br|4: Barres: 80,410,417,411,408,421,420,422
4||br|5: Barres: 523,526-524,520-522,44,333,336
4||br|6: Barres: 384,387,139,140,36-39,43,191,19
4||br|7: Barres: 338,532
4||br|8: Barres: 5,6,2-4,10,11,28,24,9,12,98,35,38
3|+|f|Composants
3|+|f|Courbes
3|-|o|Réducteurs
4||red|1: Nœuds: 92,91; Défini par l'utilisateur;
4||red|2: Nœuds: 78,231; EN 10253-2 - Type A,
4||red|3: Nœuds: 197,3; Défini par l'utilisateur; 4
4||red|4: Nœuds: 80,125; Défini par l'utilisateur;
4||red|5: Nœuds: 487,126; Défini par l'utilisateu
3|-|o|Pièces en T
4||te|1: Nœud: 904; Exécuter: 4: DN 125, 100 m
3||f|Facteurs de connexions de bifurcation
3||f|Joints de dilatation axiales
3||f|Joint de dilatation angulaire
2|-|o|Modules additionnels
3|-|o|Favoris
4||pipe|*RF-PIPING Design - Vérification de la t
3||surf|RF-STEEL Surfaces - Analyse générale des co
3||I|RF-STEEL Members - Analyse générale de co
3||EC|RF-STEEL EC3 - Vérification des barres en aci
3||AISC|RF-STEEL AISC - Vérification des barres en a
3||IS|RF-STEEL IS - Vérification des barres en acier
3||SIA|RF-STEEL SIA - Vérification des barres en aci
3||BS|RF-STEEL BS - Vérification des barres en acie
3||GB|RF-STEEL GB - Vérification des barres en acie`;

const TREE = TREE_SRC.split("\n").map((l) => {
  const [lv, ex, ic, tx] = l.split("|");
  return { level: Number(lv), ex, ic, text: tx.startsWith("*") ? tx.slice(1) : tx, bold: tx.startsWith("*") };
});

const hasNext = (i: number, level: number) => {
  for (let j = i + 1; j < TREE.length; j++) {
    if (TREE[j].level === level) return true;
    if (TREE[j].level < level) return false;
  }
  return level === 2 || level === 3;
};

const Tree = () => (
  <ul className="min-w-0 flex-1 overflow-hidden pt-px pl-[2px] text-[11px] text-black" role="tree" aria-label="Navigateur de projet">
    {TREE.map((r, i) => (
      <li key={i} role="treeitem" aria-level={r.level + 1} className="flex h-[18px] items-center">
        {Array.from({ length: r.level }, (_, k) => {
          const own = k + 1 === r.level;
          const next = hasNext(i, k + 1);
          return (
            <svg key={k} viewBox="0 0 19 18" width="19" height="18" className="shrink-0" aria-hidden="true">
              <g stroke="#808080" strokeDasharray="1 1">
                {own && <path d="M9.500 0V9" />}
                {next && <path d="M9.500 0V18" />}
                {own && <path d="M10 9.500h9" />}
              </g>
              {own && r.ex && (
                <>
                  <rect x="5.500" y="5.500" width="8" height="8" fill="#fff" stroke="#919191" />
                  <path d={r.ex === "+" ? "M7 9.500h5M9.500 7v5" : "M7 9.500h5"} stroke="#2b4b9b" />
                </>
              )}
            </svg>
          );
        })}
        <span className="flex w-[22px] shrink-0 items-center justify-center pr-1">{TICONS[r.ic] ?? modIcon(r.ic)}</span>
        <span className={"whitespace-nowrap " + (r.bold ? "font-bold" : "")}>{r.text}</span>
      </li>
    ))}
  </ul>
);

const PanelHead = ({ title }: { title: string }) => (
  <div className="flex h-[18px] shrink-0 items-center bg-[#b9c0ca] pr-[6px] pl-1 text-[11px] text-[#404048]">
    <h2>{title}</h2>
    <div className="ml-auto flex items-center gap-[9px] text-[#666]">
      <button type="button" aria-label="Épingler"><Pin /></button>
      <button type="button" aria-label={"Fermer " + title}><Close /></button>
    </div>
  </div>
);

const Navigator = () => (
  <aside className="flex w-[334px] shrink-0 flex-col pt-px">
    <PanelHead title="Navigateur de projet - Données" />
    <div className="mt-[3px] ml-[3px] flex min-h-0 flex-1 flex-col border border-[#8a8f99] bg-[#fdfcf4]">
      <div className="flex min-h-0 flex-1">
        <Tree />
        <div className="mr-[3px] flex w-4 shrink-0 flex-col items-center bg-[#f0f0f0] py-1">
          <button type="button" aria-label="Défiler vers le haut"><Chev d="u" /></button>
          <div className="mt-[2px] h-[45%] w-[15px] bg-[#cdcdcd]" />
          <button type="button" aria-label="Défiler vers le bas" className="mt-auto"><Chev d="d" /></button>
        </div>
      </div>
      <div className="mr-[3px] flex h-4 items-center bg-[#f0f0f0] px-1">
        <button type="button" aria-label="Défiler à gauche"><Chev d="l" /></button>
        <div className="ml-[4px] h-[14px] w-[93px] bg-[#cdcdcd]" />
        <button type="button" aria-label="Défiler à droite" className="mr-[17px] ml-auto"><Chev d="r" /></button>
      </div>
    </div>
    <div role="tablist" className="flex h-[25px] shrink-0 items-start gap-[6px] pt-[2px] pl-1 text-[11px] text-[#50545e]">
      <button type="button" role="tab" aria-selected="true" className="flex h-[20px] items-center gap-[2px] rounded-b border border-t-0 border-white bg-[#eef1f6] px-px">
        <svg viewBox="0 0 18 16" width="17" height="15" aria-hidden="true"><path d="M1 3h6l1 2h7v8H1z" fill="#f0cf45" stroke="#9c7f16" /><rect x="7.500" y="1.500" width="8" height="6" fill="#dbe8fa" stroke="#3a66b0" /><circle cx="9" cy="9" r="3.500" fill="#cfe2f8" stroke="#345" /><path d="M12 12l4 3.500" stroke="#345" strokeWidth="2" /></svg>
        Données
      </button>
      <button type="button" role="tab" aria-selected="false" className="flex h-[20px] items-center gap-[2px] px-px">
        <svg viewBox="0 0 18 16" width="17" height="15" aria-hidden="true"><rect x="2.500" y="3.500" width="11" height="11" fill="#dbe8fa" stroke="#3a66b0" /><path d="M4 8h8M4 10.500h8M4 13h5" stroke="#3a66b0" /><path d="M7 4l4-3h6v3l-5 1-2 2z" fill="#a06840" stroke="#4a2a18" /></svg>
        Afficher
      </button>
      <button type="button" role="tab" aria-selected="false" className="flex h-[20px] items-center gap-px px-[5px]">
        <svg viewBox="0 0 16 16" width="15" height="15" aria-hidden="true"><path d="M12 1L4 10l3 3 7-10z" fill="#4a6fb8" stroke="#223a70" /><path d="M1 14.500h13M3 11l-2 3M13 8l1 6" stroke="#223a70" strokeWidth="1.500" /></svg>
        Vues
      </button>
    </div>
  </aside>
);

/* ---------- 3D model ---------- */
const Pipe = ({ d, c, w = 9 }: { d: string; c: [string, string, string]; w?: number }) => (
  <g fill="none" strokeLinecap="round" strokeLinejoin="round">
    <path d={d} stroke={c[0]} strokeWidth={w} />
    <path d={d} stroke={c[1]} strokeWidth={w - 3} />
    <path d={d} stroke={c[2]} strokeWidth={Math.max(2, w - 7)} opacity=".7" />
  </g>
);
const BROWN: [string, string, string] = ["#8c5254", "#9c5d5f", "#a86a6b"];
const BROWN_D: [string, string, string] = ["#704445", "#7c4b4c", "#865354"];
const BLUE: [string, string, string] = ["#6464c8", "#7272da", "#8080ea"];
const BLUE_D: [string, string, string] = ["#5050a4", "#5b5bb2", "#6565be"];
const GREEN: [string, string, string] = ["#547c00", "#659600", "#74a800"];
const GREEN_D: [string, string, string] = ["#446600", "#507800", "#5a8400"];
const SKY: [string, string, string] = ["#4878d0", "#5584e0", "#6696f0"];
const SKY_D: [string, string, string] = ["#3a66b0", "#4470bc", "#4c7ac8"];
const RED: [string, string, string] = ["#d80000", "#f20000", "#ff1a1a"];
const DARK: [string, string, string] = ["#223a00", "#2a4600", "#335200"];

const Sup = ({ x, y, base = true }: { x: number; y: number; base?: boolean }) => (
  <g fill="#22ee3a">
    <circle cx={x} cy={y - 7} r="4" opacity=".85" />
    <path d={`M${x} ${y - 7}L${x + 11} ${y}L${x} ${y + 5}L${x - 11} ${y}z`} opacity=".6" />
    <path d={`M${x - 11} ${y}L${x + 11} ${y - 1}L${x + 3} ${y + 5}H${x - 5}z`} fill="#10c428" opacity=".6" />
    {base && <rect x={x - 3} y={y + 4} width="6" height="6" opacity=".8" />}
  </g>
);
const Slide = ({ x, y }: { x: number; y: number }) => (
  <g>
    <Sup x={x} y={y} />
    <path d={`M${x - 11} ${y + 5}l16 2M${x + 2} ${y + 4}l10-2M${x - 10} ${y + 8}l14 1`} stroke="#22dd3a" />
  </g>
);
const Foot = ({ x, y, c = "#5a5ad8" }: { x: number; y: number; c?: string }) => (
  <g>
    <rect x={x - 6} y={y - 4} width="12" height="9" fill={c} />
    <rect x={x - 1} y={y - 6} width="4" height="3" fill="#8a0000" />
    <circle cx={x} cy={y + 9} r="4" fill="#2bea40" />
    <path d={`M${x - 6} ${y + 13}h11l6 3-4 4h-17z`} fill="#3ae04c" opacity=".8" />
    <path d={`M${x - 10} ${y + 19}l17 1 4-4`} stroke="#10a020" fill="none" opacity=".6" />
  </g>
);
const Bracket = ({ x, y }: { x: number; y: number }) => (
  <g>
    <path d={`M${x - 8} ${y - 4}l17 2v6l-17-2z`} fill="#1414a8" />
    {[[-9, -1], [-5, 3], [1, 4], [7, 4], [9, 1]].map(([a, b], i) => <rect key={i} x={x + a} y={y + b - 1} width="3" height="3" fill="#8a0010" />)}
  </g>
);
const Plate = ({ x, y, side }: { x: number; y: number; side: "l" | "r" }) =>
  side === "r" ? (
    <g>
      <rect x={x - 11} y={y - 6} width="4" height="17" fill="#1414a0" />
      <path d={`M${x - 7} ${y - 9}L${x + 7} ${y - 8}V${y + 9}L${x - 7} ${y + 6}z`} fill="#1df036" opacity=".75" />
      <path d={`M${x - 7} ${y + 4}l8-8 3 6-4 5z`} fill="#0fb828" opacity=".6" />
    </g>
  ) : (
    <g>
      <rect x={x + 1} y={y - 12} width="8" height="16" fill="#1414a0" />
      <rect x={x + 3} y={y - 14} width="4" height="3" fill="#8a0000" />
      <path d={`M${x - 9} ${y - 9}L${x + 9} ${y - 8}V${y + 9}L${x - 9} ${y + 7}z`} fill="#1df036" opacity=".8" />
      <path d={`M${x - 4} ${y + 2}l9-6v10z`} fill="#0fb828" opacity=".7" />
    </g>
  );
const Dot = ({ x, y }: { x: number; y: number }) => <rect x={x - 1.5} y={y - 1.5} width="3.500" height="3.500" fill="#7a0008" />;

const MIDS = [0, 174, 346];

const Model = () => (
  <svg viewBox="341 101 1001 1037" className="h-full w-full" preserveAspectRatio="xMinYMin meet" role="img" aria-label="Modèle 3D de tuyauterie">
    {/* upper left risers */}
    <Pipe d="M835 125L844 119" c={GREEN_D} w={8} />
    <Pipe d="M844 119Q850 117 850 128V178Q850 187 843 192" c={GREEN} w={8} />
    <Pipe d="M811 226Q811 215 819 209L843 192" c={GREEN_D} w={8} />
    <Pipe d="M811 224V376" c={GREEN} w={8} />
    <Pipe d="M857 117L866 110" c={SKY_D} w={8} />
    <Pipe d="M866 110Q872 108 872 120V176Q872 186 865 192" c={SKY} w={8} />
    <Pipe d="M840 224Q840 215 846 208L865 192" c={SKY_D} w={8} />
    <Pipe d="M840 222V344" c={SKY} w={8} />
    <Foot x={833} y={133} /><Foot x={858} y={121} />
    <Dot x={849} y={114} /><Dot x={872} y={105} /><Dot x={851} y={186} /><Dot x={873} y={188} />
    <path d="M811 219v11M840 216v10" stroke="#111" /><Dot x={811} y={219} /><Dot x={840} y={216} />
    <Plate x={822} y={250} side="r" /><Plate x={851} y={246} side="r" />

    {/* supports behind the portal */}
    <g fill="#1df036" opacity=".8">
      <path d="M728 354l20 2v18l-20-2zM751 341l14 1v10h-14zM777 344l13 1v14l-13-2z" />
      <path d="M745 362l12-6 14 4v14l-20 3z" />
    </g>
    <rect x="770" y="355" width="9" height="10" fill="#1414a0" />
    <Sup x={695} y={370} /><Sup x={722} y={401} /><Slide x={761} y={401} />

    {/* brown and purple lines */}
    <Pipe d="M745 316V875Q745 890 739 898L705 928" c={BROWN} w={10} />
    <Pipe d="M736 902L705 928" c={BROWN_D} w={10} />
    <Pipe d="M772 345V875Q772 896 785 899L828 904" c={BLUE} w={10} />
    <Pipe d="M806 940L838 908" c={BLUE_D} w={9} />
    <Pipe d="M828 904Q838 905 838 908" c={BLUE} w={9} />
    {MIDS.map((o) => (
      <g key={o}>
        <Plate x={757} y={463 + o} side="r" /><Plate x={784} y={466 + o} side="r" />
        <Plate x={736} y={477 + o} side="l" /><Plate x={763} y={479 + o} side="l" />
      </g>
    ))}
    <Pipe d="M683 359L738 308Q745 304 745 318" c={BROWN_D} w={9} />
    <Pipe d="M702 396L765 341Q772 336 772 350" c={BLUE_D} w={9} />
    <Pipe d="M1027 134L1032 129" c={BROWN_D} w={8} />
    <Pipe d="M1032 129Q1038 126 1038 137V200Q1038 210 1031 215" c={BROWN} w={8} />
    <Pipe d="M1003 145L1010 139" c={BLUE_D} w={8} />
    <Pipe d="M1010 139Q1016 137 1016 147V196Q1016 206 1009 211" c={BLUE} w={8} />
    <g fill="#22dd3a">
      <path d="M976 206l7 0 7 9v4l-7 7h-7zM1054 216l-12 7 12 10zM1001 210l14 6-12 6zM1022 213l10 5-8 6z" opacity=".8" />
      <rect x="986" y="214" width="66" height="6" opacity=".5" />
      <rect x="1046" y="221" width="6" height="5" />
    </g>
    <path d="M971 210l7-5M972 227l7-6M976 231l7-6M1041 236l9-8M1045 218l9-7M1019 232l6-8M997 214l6-6M1058 225h-8" stroke="#22dd3a" strokeWidth="1.500" />
    <g fill="#1414a0"><path d="M988 214h8v8h-8zM1006 216h10v9h-10zM1026 218h8v9h-8z" /></g>
    <Dot x={989} y={221} /><Dot x={1004} y={223} /><Dot x={1011} y={224} /><Dot x={1024} y={224} /><Dot x={1030} y={226} /><Dot x={996} y={215} />
    <Pipe d="M977 244Q977 234 985 229L1009 211" c={BLUE_D} w={8} />
    <Pipe d="M1006 240Q1006 231 1013 226L1031 215" c={BROWN_D} w={8} />
    <Pipe d="M683 359L710 346Q714 345 722 346L975 375Q1006 380 1006 360V240" c={BROWN} w={9} />
    <Pipe d="M840 340V350" c={SKY} w={10} />
    <path d="M835 349h10v7l-5 5-5-5z" fill="#5584e0" />
    <Bracket x={751} y={358} />
    <Pipe d="M702 396L738 378Q744 375 752 376L955 402Q977 405 977 385V244" c={BLUE} w={9} />
    <Bracket x={761} y={387} />
    <Plate x={988} y={270} side="r" /><Plate x={1017} y={266} side="r" />
    <Foot x={1002} y={150} /><Foot x={1025} y={141} />
    <Dot x={1016} y={134} /><Dot x={1038} y={124} /><Dot x={1006} y={236} /><Dot x={977} y={239} />
    <path d="M1006 372v8M977 397v8M998 379h8M970 404h8" stroke="#111" /><Dot x={1006} y={380} /><Dot x={977} y={404} />
    <Dot x={679} y={362} /><Dot x={699} y={399} /><Dot x={746} y={304} /><Dot x={772} y={335} />
    <Bracket x={912} y={376} /><Sup x={914} y={389} base={false} />
    <Pipe d="M895 395L930 399" c={BLUE} w={9} />
    <Bracket x={905} y={404} /><Slide x={905} y={417} />
    <Pipe d="M811 356V378" c={GREEN} w={9} />
    <rect x="803" y="376" width="14" height="13" fill="#00d800" />
    <g fill="#b8602e" stroke="#8a4420" strokeWidth=".8">
      <circle cx="811" cy="329" r="5.500" /><ellipse cx="804" cy="329" rx="2" ry="5" fill="none" strokeWidth="2" /><rect x="807" y="322" width="8" height="3" /><rect x="807" y="333" width="8" height="3" />
      <circle cx="840" cy="327" r="5.500" /><ellipse cx="847" cy="326" rx="2" ry="5" fill="none" strokeWidth="2" /><rect x="836" y="320" width="8" height="3" /><rect x="836" y="331" width="8" height="3" />
    </g>
    <rect x="828" y="295" width="25" height="15" fill="#fff" />
    <text x="829" y="306" fontSize="9" fill="#808080" fontFamily="Liberation Sans">Line 1</text>

    {/* bottom manifold */}
    <Pipe d="M662 934Q668 930 684 933L848 953Q877 958 877 975V1036" c={DARK} w={9} />
    <Slide x={707} y={967} /><Slide x={778} y={976} /><Slide x={825} y={973} /><Sup x={808} y={962} />
    <g fill="#b8602e" stroke="#8a4420" strokeWidth=".8">
      <path d="M683 931l14-4 10 5v8l-20-2z" /><ellipse cx="697" cy="922" rx="6" ry="2.500" fill="none" strokeWidth="2" /><path d="M696 923h3v6h-3z" />
      <path d="M780 943l12-5 12 5v8l-24-2z" /><ellipse cx="795" cy="940" rx="8" ry="2.500" />
    </g>
    <g fill="none" stroke="#2e8a4c" strokeWidth="4">
      <path d="M682 927v11M700 927q10-4 12 12M795 937q12-2 13 13" />
    </g>
    <Dot x={715} y={932} /><Dot x={813} y={943} />
    <Pipe d="M650 939L935 971Q944 972 950 966L956 963" c={RED} w={10} />
    <Pipe d="M957 966V1012Q957 1020 951 1024L944 1030" c={RED} w={10} />
    <ellipse cx="650" cy="938" rx="4" ry="8" fill="#2e8a4c" stroke="#1d6a36" /><ellipse cx="644" cy="938" rx="2.500" ry="4.500" fill="#c80000" />
    <Bracket x={707} y={953} /><Bracket x={778} y={961} /><Bracket x={883} y={974} />
    <Dot x={877} y={957} /><Dot x={943} y={972} /><path d="M870 957h7" stroke="#111" />
    <g fill="#22e038" opacity=".85">
      <path d="M859 978l-8 10 8 11zM846 984h8v7h-8zM858 984h10v8h-10zM903 984l-12 11 12 9zM902 991h7v7h-7zM885 992h10v7h-10z" />
      <path d="M873 988l10-6 12 4-9 8z" /><path d="M880 978h7v20h-7z" opacity=".7" />
    </g>
    <path d="M866 981h6v18h-6zM884 991h4v10h-4z" fill="#1414a0" />
    <Dot x={868} y={982} /><Dot x={868} y={990} /><Dot x={868} y={999} /><Dot x={886} y={1001} />
    <g fill="#b8602e" stroke="#8a4420" strokeWidth=".8">
      <rect x="873" y="1037" width="8" height="22" /><circle cx="877" cy="1044" r="6" /><ellipse cx="884" cy="1041" rx="3" ry="5" fill="none" strokeWidth="1.600" />
      <ellipse cx="937" cy="1025" rx="5" ry="2" fill="none" strokeWidth="1.800" /><path d="M936 1026h2.500v6H936z" />
    </g>
    <Pipe d="M877 1066V1098Q877 1108 872 1112L867 1116" c={DARK} w={8} />
    <ellipse cx="877" cy="1060" rx="7" ry="3" fill="#3a9a5a" stroke="#1d6a36" />
    <path d="M871 1109v-10" stroke="#b8602e" strokeWidth="3" /><circle cx="871" cy="1099" r="2.500" fill="none" stroke="#b8602e" strokeWidth="1.500" /><Dot x={870} y={1096} />
    <circle cx="867" cy="1122" r="4" fill="#2bea40" /><path d="M862 1124h10l6 4-5 6h-17z" fill="#3ae04c" opacity=".85" />
    <Dot x={867} y={1117} />
    <path d="M950 1050l18 4 4 2-6 6-18-2z" fill="#3ae04c" opacity=".85" /><rect x="945" y="1053" width="6" height="8" fill="#3ae04c" />
    <Pipe d="M929 1049Q945 1053 952 1051L961 1046" c={RED} w={8} />
    <Dot x={926} y={1049} /><Dot x={952} y={1052} />
    <rect x="927" y="1032" width="26" height="14" fill="#fff" />
    <text x="928" y="1043" fontSize="9" fill="#808080" fontFamily="Liberation Sans">Line 2*</text>

    {/* axis triad */}
    <path d="M395 993V960" stroke="#1030ff" strokeWidth="1.500" /><path d="M392 962l3-8 3 8z" fill="#1030ff" />
    <path d="M395 993l32 3" stroke="#10e020" strokeWidth="1.500" /><path d="M424 992l10 5-11 2z" fill="#10e020" />
    <path d="M395 993l-10 9" stroke="#e02020" strokeWidth="1.500" /><path d="M383 999l-2 6 7-2z" fill="#e02020" />
    <g fontSize="9" fontWeight="bold" fontFamily="Liberation Sans">
      <text x="392" y="950" fill="#1030ff">Z</text><text x="439" y="1001" fill="#10e020">Y</text><text x="375" y="1012" fill="#e02020">X</text>
    </g>
  </svg>
);

const PipeBox = () => (
  <section className="absolute top-[13px] left-4 w-[141px] border-2 border-[#7c7c7c] bg-gradient-to-b from-[#eef2f9] to-[#d8dde7] p-px">
    <div className="flex h-[22px] items-center bg-[#b9c0ca] pr-[3px] pl-[2px] text-[11px] font-bold text-[#4c5058]">
      <h2>Tuyau</h2>
      <button type="button" aria-label="Fermer Tuyau" className="ml-auto font-normal"><Close /></button>
    </div>
    <div className="grid grid-cols-6 gap-y-1 px-px pt-[2px]">
      {"pBranch pRed pValve p3 p4 pElbow pFl pFl2 pT pT2 pBel pBel2".split(" ").map((n) => (
        <button key={n} type="button" aria-label={n} className="flex h-[22px] items-center justify-center"><Icon n={n} /></button>
      ))}
    </div>
  </section>
);

const LEGEND: [string, string][] = [
  ["bg-[#6699ff]", "1: Line 1: Barres: 84,416"],
  ["bg-[#f5c400]", "2: Line 2: Barres: 337,33"],
  ["bg-[#b96e70]", "3: Barres: 54,163,55,56"],
  ["bg-[#7ab800]", "4: Barres: 80,410,417,4"],
  ["bg-[#ff0000]", "5: Barres: 523,526-524,"],
  ["bg-[#8a8aff]", "6: Barres: 384,387,139,"],
  ["bg-[#966428]", "7: Barres: 338,532"],
  ["bg-[#325a00]", "8: Barres: 5,6,2-4,10,11"],
];

const LegendBox = () => (
  <section className="absolute right-[18px] bottom-[52px] flex h-[518px] w-[164px] flex-col border-r-2 border-b-2 border-[#8a9099] bg-[#e6eaf2] p-[3px] pb-[4px] shadow-[inset_1px_1px_0_#b8bec8]">
    <div className="flex h-[22px] shrink-0 items-center bg-[#b9c0ca] pr-[3px] pl-[2px] text-[11px] font-bold text-[#4c5058]">
      <h2>Panneau</h2>
      <button type="button" aria-label="Fermer Panneau" className="ml-auto"><Close /></button>
    </div>
    <div className="flex min-h-0 flex-1 flex-col border-b border-[#8a9099] bg-[#f0f0f0] px-[5px] pt-[9px] text-[11px] leading-4 text-black">
      <h3>Branches de tuyau</h3>
      <ul className="mt-px flex-1 overflow-hidden border-t border-l border-[#999] bg-white pt-px pl-[6px]">
        {LEGEND.map(([c, t]) => (
          <li key={t} className="flex h-[18px] items-center">
            <span className={"h-[15px] w-4 shrink-0 border border-[#ddd] " + c} />
            <span className="ml-[5px] whitespace-nowrap">{t}</span>
          </li>
        ))}
      </ul>
      <button type="button" aria-label="Options du panneau" className="mt-[6px] mb-[9px] flex h-5 w-[25px] items-center justify-center border border-[#adadad] bg-[#e1e1e1]">
        <svg viewBox="0 0 18 16" width="18" height="16" aria-hidden="true"><rect x="1" y="2" width="3" height="10" rx="1" fill="#5a4a40" /><rect x="4" y="2" width="5" height="10" rx="1" fill="#fff" stroke="#888" /><path d="M9 3q4-2 5 1" stroke="#333" fill="none" strokeWidth="1.500" /><rect x="9.500" y="6.500" width="7" height="9" fill="#fff" stroke="#777" /><path d="M11 9h4M11 11h4M11 13h4" stroke="#888" /></svg>
      </button>
    </div>
    <div className="flex h-[22px] bg-[#ccd1db] pl-[5px]">
      <button type="button" aria-label="Échelle de couleurs" className="flex h-[18px] w-[22px] flex-col justify-center gap-[2px] rounded-b bg-white pl-[3px]">
        <span className="h-[3px] w-[14px] bg-[#0000ff]" />
        <span className="h-[3px] w-[14px] bg-[#00e000]" />
        <span className="h-[3px] w-[14px] bg-[#ff0000]" />
      </button>
    </div>
  </section>
);

/* ---------- component table ---------- */
/* type branch member start end dX dY dZ */
const DATA = `T! 1 84 903 80 - - 213.5
R 1 416 80 125 - - 127.0
T 1 412 125 124 - - 61.0
V 1 418 124 127 - - 200.0
T 1 414 127 931 - - 839.6
T 1 419 931 929 - - 210.0
C 1 423,85 929 518 - - 430.8
C 1 86,87 518 519 -1276.0 - -
C 1 88,89 519 427 - - 1202.2
T 1 90 427 437 550.2 - -
T! 2 337 222 292 - - 176.1
V 2 339 292 294 - - 76.0
W! 3 54 582 79 -200.0 - -
C 3 163,55 79 501 -1725.0 - -
T 3 56 501 144 - - 349.3
T 3 69 144 745 - - 669.8
T 3 211 745 744 - - 210.0
T 3 212 744 777 - - 2290.0
T 3 251 777 776 - - 210.0
T 3 252 776 809 - - 2290.0
T 3 291 809 808 - - 210.0
T 3 292 808 841 - - 1442.4
T 3 332 841 166 - - 105.0
T 3 70 166 840 - - 105.0
C 3 329,57 840 502 - - 631.6
T 3 58 502 858 1900.0 - -
T 3 357 858 857 210.0 - -
C 3 358,59 857 503 520.5 - -
C 3 60,61 503 504 - 513.4 296.4
T 3 62 504 874 - 444.6 -
T 3 377 874 875 - 210.0 -
T 3 415 875 903 - 1175.0 -
T 3 394 903 892 - 954.0 -
T 3 404 892 893 - 210.0 -
T 3 405 893 197 - 145.0 -
R 3 413 197 3 - 127.0 -
C 3 455,456 3 184 - 982.0 -
T 3 457 184 255 - - 506.1
T 3 461 255 308 - - 200.0
T 3 462 308 957 - - 735.1
T 3 482 957 956 - - 210.0
C 3 483,63 956 511 - - 430.8
T 3 64 511 981 -520.5 - -
T 3 73 981 982 -210.0 - -
C 3 83,65 982 512 -545.5 - -
C 3 66,67 512 513 - - 1202.2
T 3 68 513 341 550.2 - -
P! 4 80 904 75 - - 150.0
T 4 410 75 487 - - 101.0
R 4 417 487 126 - - 127.0
T 4 411 126 2 - - 122.0
T 4 408 2 199 - - 200.0
V 4 421 199 214 - - 200.0
T 4 420 214 930 - - 837.6
T 4 422 930 928 - - 210.0`.split("\n").map((l) => l.split(" "));

const KIND: Record<string, [string, string]> = {
  T: ["Tuyau", "bg-[#6699ff]"],
  R: ["Réducteur", "bg-[#b96e70]"],
  V: ["Valve", "bg-[#8a8aff]"],
  C: ["Coude", "bg-[#f5c400]"],
  W: ["Valve à 3 voies", "bg-[#966428]"],
  P: ["Pièce en T", "bg-[#ebc8a0]"],
};

const TH = "border-r border-[#a0a0a0] p-0 font-normal";
const TD = "h-4 border-r border-b border-[#a0a0a0] p-0";
const ROWH = "h-4 border-r-2 border-b border-[#707070] p-0 pr-1 font-normal shadow-[inset_1px_1px_0_#fff] ";

const DataTable = () => (
  <table className={"w-full table-fixed border-separate border-spacing-0 text-center text-[11px] leading-[15px] text-black " + ARIAL}>
    <colgroup>
      <col className="w-[46px]" /><col /><col className="w-[54px]" />
      <col className="w-12" /><col className="w-12" /><col className="w-12" />
      <col className="w-[60px]" /><col className="w-[60px]" /><col className="w-[60px]" />
    </colgroup>
    <thead className="bg-[#f0f0f0]">
      <tr className="h-[15px]">
        <th rowSpan={3} className="border-r-2 border-b border-[#707070] bg-[#f0f0f0] p-0 pt-4 font-normal">N°</th>
        {"ABCDEFGH".split("").map((c) => (
          <th key={c} className={"border-r border-b-2 border-[#707070] p-0 text-[12px] leading-[13px] font-normal shadow-[inset_1px_1px_0_#fff] " + (c === "A" ? "bg-[#3399ff] text-white" : "bg-[#e0e0e0]")}>{c}</th>
        ))}
      </tr>
      <tr className="h-[15px]">
        <th className={TH}>Type de</th><th className={TH + " overflow-hidden whitespace-nowrap"}>Branche de</th><th className={TH}>Barre</th>
        <th colSpan={2} className={TH}>Nœud n°</th><th colSpan={3} className="p-0 font-normal">Longueur de projection</th>
      </tr>
      <tr className="h-[17px] align-top">
        {["composant", "n°", "n°", "initial", "final", "Δx [mm]", "Δʏ [mm]", "Δᴢ [mm]"].map((t, i) => (
          <th key={i} className={TH + " border-b"}>{t}</th>
        ))}
      </tr>
    </thead>
    <tbody>
      {DATA.map((r, i) => {
        const [name, color] = KIND[r[0][0]];
        const bold = r[0][1] === "!";
        const last = i === DATA.length - 1;
        return (
          <tr key={i} className="bg-white">
            <th scope="row" className={ROWH + (last ? "bg-[#3399ff] text-white" : "bg-gradient-to-b from-[#e8e8e8] to-[#dcdcdc]")}>{i + 1}</th>
            <td className={TD}>
              <div className={"flex h-[15px] items-center pl-px text-left " + (bold ? "text-[12px] font-bold" : "")}>
                <span className={"h-[13px] w-[13px] shrink-0 border border-[#333] " + color} />
                <span className={"flex-1 pl-1 whitespace-nowrap " + (last ? "outline-1 -outline-offset-1 outline-dotted outline-black" : "")}>{name}</span>
              </div>
            </td>
            <td className={TD + " bg-[#f0f0f0]"}>{r[1]}</td>
            <td className={TD}>{r[2]}</td>
            <td className={TD}>{r[3]}</td>
            <td className={TD}>{r[4]}</td>
            {[5, 6, 7].map((k) => <td key={k} className={TD + " pr-1 text-right"}>{r[k] === "-" ? "" : r[k]}</td>)}
          </tr>
        );
      })}
    </tbody>
  </table>
);

const NAV = ["M3 1v8M9 1v8L4 5z", "M8 1v8L3 5z", "M2 1v8l5-4z", "M7 1v8M1 1v8l5-4z"];
const SHEETS: [string, string][] = [["Branches de tuyau", "w-[98px]"], ["Composants", "w-[68px]"], ["Courbures", "w-[58px]"], ["Réducteurs", "w-[64px]"], ["Pièces en T", "w-[67px]"]];

const TablePanel = () => (
  <aside className="flex w-[571px] shrink-0 flex-col bg-[#f0f0f0]">
    <div className="bg-[#d0d4de] pt-px"><PanelHead title="7.4 Composants" /></div>
    <div className="flex h-[27px] shrink-0 items-center overflow-hidden bg-gradient-to-b from-[#e9edf6] to-[#d9dee8] pl-2">
      <Bar items="gEdit gAdd gDown gTri gWave !gBeam | gLeft gRight | !jumpL !jumpR cycle | plus times colon | gX | delX delL delR | gYellow gBlue | gPen | handDoc glasses" />
    </div>
    <div className="flex min-h-0 flex-1 flex-col border-t-2 border-l border-[#6c6c6c]">
      <div className="flex border-t border-l border-[#a0a0a0]">
        <div className="min-w-0 flex-1"><DataTable /></div>
        <div className="flex w-5 shrink-0 flex-col items-center py-1 pr-[2px]">
          <button type="button" aria-label="Lignes précédentes"><Chev d="u" /></button>
          <div className="mt-[2px] h-[37%] w-[15px] bg-[#cdcdcd]" />
          <button type="button" aria-label="Lignes suivantes" className="mt-auto"><Chev d="d" /></button>
        </div>
      </div>
      <div className="mt-[6px] flex h-[17px] items-center border-b border-[#b0b0b0] px-[4px]">
        <button type="button" aria-label="Colonnes précédentes"><Chev d="l" /></button>
        <div className="ml-1 h-4 w-[55%] bg-[#cdcdcd]" />
        <button type="button" aria-label="Colonnes suivantes" className="ml-auto"><Chev d="r" /></button>
      </div>
      <div role="tablist" className={"mt-1 flex border-t border-[#707070] text-[11px] leading-4 text-black " + ARIAL}>
        {SHEETS.map(([t, w]) => (
          <button key={t} type="button" role="tab" aria-selected={t === "Composants"} className={"h-[17px] rounded-b-[4px] border border-t-0 border-[#707070] whitespace-nowrap " + w + (t === "Composants" ? " bg-white" : "")}>{t}</button>
        ))}
        <div className="ml-auto flex">
          {NAV.map((d, i) => (
            <button key={d} type="button" aria-label={["Premier", "Précédent", "Suivant", "Dernier"][i] + " onglet"} className="flex h-[17px] w-4 items-center justify-center border border-[#888] border-t-white border-l-white">
              <svg viewBox="0 0 10 10" width="9" height="9" aria-hidden="true"><path d={d} fill="#000" stroke="#000" strokeWidth={i % 3 === 0 ? 1.2 : 0} /></svg>
            </button>
          ))}
        </div>
      </div>
    </div>
  </aside>
);

/* ---------- status bar ---------- */
const MODES: [string, string, boolean][] = [
  ["SAISIE", "w-[40px]", true], ["GRILLE", "w-[43px]", false], ["POLAIRE", "w-[56px]", true],
  ["SAISIE D'OB.", "w-[73px]", true], ["GLIGNES", "w-[53px]", true], ["DXF", "w-[29px]", true],
];
const COORDS: [string, string][] = [["X:", "120.777 m"], ["Y:", "132.257 m"], ["Z:", "15.120 m"]];

const StatusBar = () => (
  <footer className={"flex h-[21px] shrink-0 items-center border-t border-[#9a9fa8] bg-gradient-to-b from-[#dfe2e8] via-[#b4bac4] to-[#b0b6c0] text-[11px] text-[#33363c] " + ARIAL}>
    <span className={"pl-1 " + UI}>Plan de travail</span>
    <div className="ml-auto flex gap-px">
      {MODES.map(([t, w, on]) => (
        <button key={t} type="button" aria-pressed={on} className={"h-[18px] border whitespace-nowrap " + w + (on ? " border-[#222] border-r-[#ddd] border-b-[#ddd]" : " border-[#ddd] border-r-[#999] border-b-[#999] bg-[#d2d6dd]")}>{t}</button>
      ))}
    </div>
    <span className="w-[152px] border-l border-[#ddd] pr-2 text-right">SC : Global XYZ</span>
    <span className="w-[88px] border-l border-[#999] pl-px">Plan: XY</span>
    {COORDS.map(([a, v]) => (
      <span key={a} className="flex w-[72px] justify-between border-l border-[#999] pr-[5px] pl-[2px] whitespace-nowrap"><span>{a}</span><span>{v}</span></span>
    ))}
    <span className="w-[5px]" />
  </footer>
);

export default function App() {
  return (
    <div className={"flex h-screen min-h-0 flex-col overflow-hidden bg-[#d0d4de] " + UI}>
      <TitleBar />
      <MenuBar />
      <Toolbars />
      <div className="flex min-h-0 flex-1">
        <Navigator />
        <main className="relative ml-[5px] min-w-0 flex-1 overflow-hidden border-t-2 border-l-2 border-[#6c6c6c] bg-white">
          <Model />
          <PipeBox />
          <LegendBox />
          <span className="absolute right-[13px] bottom-[6px] text-[11px] text-black">[m]</span>
        </main>
        <div className="w-[5px] shrink-0" />
        <TablePanel />
      </div>
      <StatusBar />
    </div>
  );
}
